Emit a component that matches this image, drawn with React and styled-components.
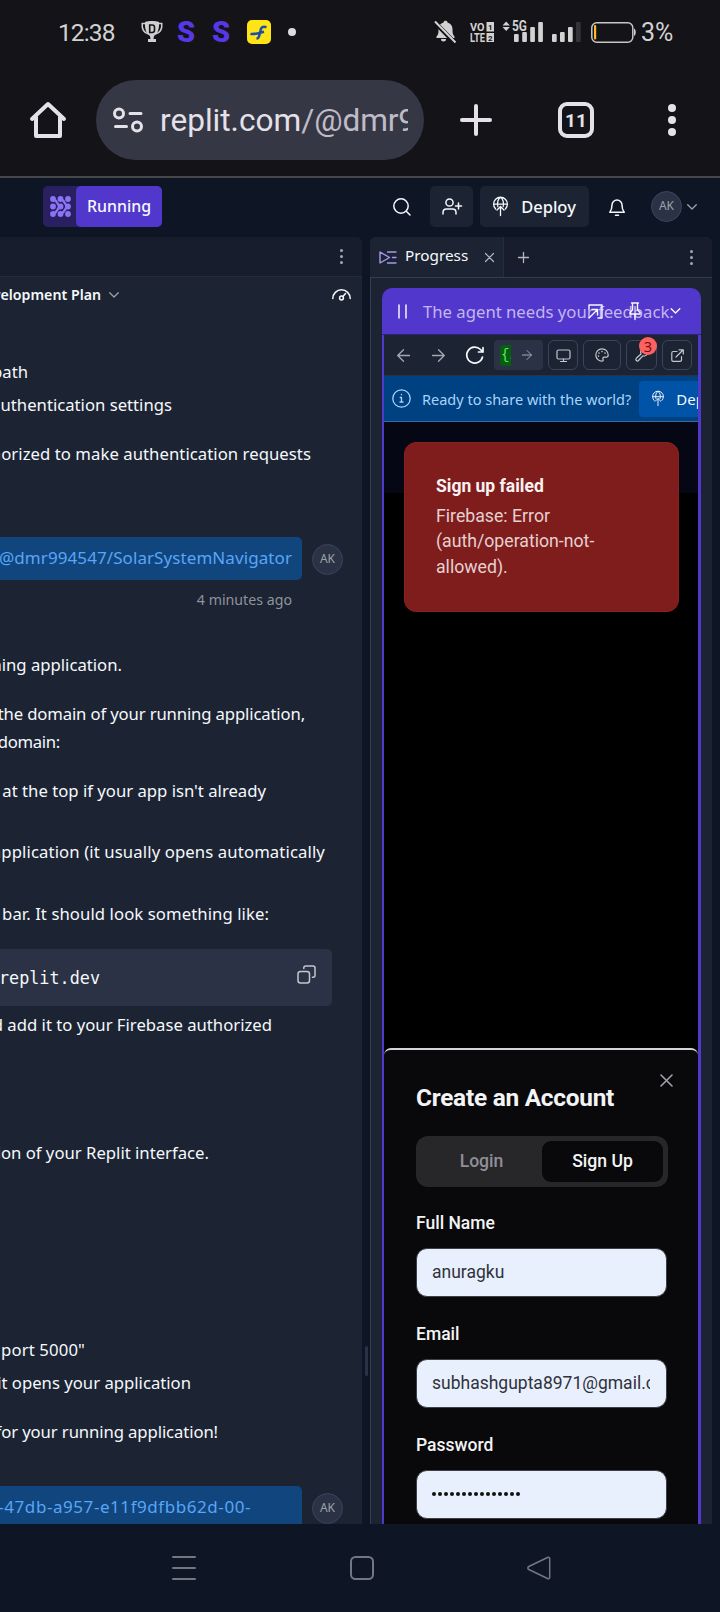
import React from 'react';
import styled, { createGlobalStyle } from 'styled-components';

const plex = '"Noto Sans", "Open Sans", sans-serif';
const roboto = 'Roboto, "Liberation Sans", sans-serif';

const GlobalStyle = createGlobalStyle`
  *, *::before, *::after { box-sizing: border-box; }
  body { margin: 0; background: #0e1525; overflow: hidden; }
  svg { display: block; flex: none; overflow: visible; }
`;

const Screen = styled.div`
  width: 720px;
  height: 1612px;
  display: flex;
  flex-direction: column;
  overflow: hidden;
  background: #0e1525;
  color: #f5f9fc;
  font-family: ${plex};
  white-space: nowrap;
`;

/* ---- Phone status bar ---- */
const StatusBar = styled.header`
  height: 64px;
  flex: none;
  display: flex;
  align-items: center;
  justify-content: space-between;
  padding: 0 46px 0 58px;
  background: #141317;
  color: #d2d2d2;
  font-family: ${roboto};
`;
const StatusGroup = styled.div`
  display: flex;
  align-items: center;
`;
const Clock = styled.span`
  width: 83px;
  font-size: 24.5px;
  letter-spacing: -0.9px;
  line-height: 30px;
  padding-top: 1px;
`;
const AppLetter = styled.span`
  width: 35px;
  font: 900 29px/32px ${roboto};
  color: #5638e6;
`;
const StatusDot = styled.i`
  width: 8px;
  height: 8px;
  border-radius: 50%;
  background: #dcdcdc;
  margin-left: 17px;
`;
const Percent = styled.span`
  font-size: 25px;
  line-height: 30px;
  margin-left: 6px;
  padding-top: 1px;
  width: 33px;
`;

/* ---- Browser bar ---- */
const BrowserBar = styled.nav`
  height: 114px;
  flex: none;
  display: flex;
  align-items: center;
  padding: 0 44px 0 28px;
  background: #141317;
  border-bottom: 2px solid #47464a;
`;
const AddressPill = styled.div`
  width: 328px;
  height: 80px;
  margin: 0 36px 0 28px;
  padding: 0 16px 0 17px;
  border-radius: 40px;
  background: #363745;
  display: flex;
  align-items: center;
  font-family: ${roboto};
  font-size: 31.6px;
  color: #e5e1e9;
`;
const Address = styled.span`
  margin-left: 17px;
  flex: 1;
  overflow: hidden;
  line-height: 44px;
  padding-top: 1px;
`;
const Path = styled.span`
  color: #bfbcc7;
  letter-spacing: -0.1px;
`;
const TabCount = styled.div`
  width: 36px;
  height: 36px;
  margin: 0 66px;
  border: 4px solid #e5e1e9;
  border-radius: 9px;
  color: #e5e1e9;
  text-align: center;
  font: 700 19px/29px ${roboto};
`;
const Dots = styled.div`
  display: flex;
  flex-direction: column;
  gap: ${p => p.$gap}px;
  margin-left: ${p => (p.$push ? 'auto' : 0)};
  i { width: ${p => p.$size}px; height: ${p => p.$size}px; border-radius: 50%; background: ${p => p.$color}; }
`;

/* ---- Workspace toolbar ---- */
const WorkspaceBar = styled.div`
  height: 59px;
  flex: none;
  display: flex;
  align-items: center;
  padding: 0 23px 2px 43px;
`;
const RunControl = styled.div`
  display: flex;
  height: 41px;
  border-radius: 5px;
  background: #292061;
  align-items: center;
  padding-left: 7px;
  gap: 5px;
`;
const RunLabel = styled.span`
  width: 86px;
  height: 41px;
  border-radius: 5px;
  background: #5237cc;
  text-align: center;
  font-size: 15.9px;
  font-weight: 500;
  line-height: 40px;
`;
const BarActions = styled.div`
  margin-left: auto;
  display: flex;
  align-items: center;
`;
const ToolButton = styled.button`
  height: 41px;
  width: ${p => p.$w}px;
  margin-left: ${p => p.$ml}px;
  padding: 0;
  border: 0;
  border-radius: 5px;
  background: #1c2333;
  color: #f5f9fc;
  display: flex;
  align-items: center;
  justify-content: center;
  gap: 13px;
  font: 500 16.5px/38px ${plex};
`;
const Avatar = styled.span`
  width: 31px;
  height: 31px;
  flex: none;
  margin-top: ${p => p.$mt || 0}px;
  border-radius: 50%;
  border: 1px solid #3c445c;
  background: #2b3245;
  color: #9da2a6;
  text-align: center;
  font-size: 12px;
  line-height: 28px;
`;

/* ---- Panels ---- */
const Workspace = styled.main`
  height: 1287px;
  flex: none;
  display: flex;
`;
const ChatPanel = styled.section`
  width: 362px;
  height: 100%;
  background: #1c2333;
  border-top-right-radius: 6px;
  overflow: hidden;
`;
const PanelHeader = styled.div`
  height: 40px;
  background: #171d2d;
  border-bottom: 1px solid #242b3c;
  display: flex;
  align-items: center;
  padding-right: 19px;
`;
const Splitter = styled.div`
  width: 8px;
  display: flex;
  justify-content: center;
  padding-top: 1109px;
  i { width: 3px; height: 30px; border-radius: 2px; background: #2b3245; }
`;
const PlanRow = styled.div`
  height: 36px;
  display: flex;
  align-items: center;
  padding: 0 11px 1px 0;
`;
const PlanTitle = styled.span`
  width: 101px;
  display: flex;
  justify-content: flex-end;
  font-size: 14.2px;
  font-weight: 600;
  margin-right: 8px;
`;
/* Lines run off the left edge of the viewport, so each is anchored by its right end. */
const Line = styled.p`
  margin: ${p => p.$mt}px 0 0;
  width: ${p => p.$w}px;
  display: flex;
  justify-content: flex-end;
  white-space: pre;
  font-size: 16.7px;
  line-height: 28px;
  letter-spacing: ${p => p.$ls || 0}px;
`;
const UserMessage = styled.div`
  display: flex;
  align-items: center;
  gap: 10px;
  margin-top: ${p => p.$mt}px;
`;
const Bubble = styled.div`
  width: 302px;
  height: 43px;
  display: flex;
  justify-content: flex-end;
  padding-right: ${p => p.$pr}px;
  border-radius: 0 5px 5px 0;
  background: #11457e;
  color: #58a6f6;
  font-size: 17px;
  letter-spacing: ${p => p.$ls}px;
  line-height: 42px;
`;
const Timestamp = styled.div`
  width: 292px;
  margin-top: 8px;
  text-align: right;
  font-size: 14.2px;
  line-height: 24px;
  color: #8f949c;
`;
const CodeBlock = styled.div`
  margin-top: 21px;
  width: 332px;
  height: 57px;
  border-radius: 0 5px 5px 0;
  background: #2b3245;
  display: flex;
  align-items: center;
  justify-content: space-between;
  padding: 0 16px 0 0;
`;
const CodeText = styled.code`
  width: 100px;
  display: flex;
  justify-content: flex-end;
  font: 16.8px/30px "DejaVu Sans Mono", monospace;
`;
const CopySlot = styled.span`
  padding-bottom: 7px;
`;

/* ---- Preview panel ---- */
const PreviewPanel = styled.section`
  width: 342px;
  height: 100%;
  display: flex;
  flex-direction: column;
  background: #1c2333;
  border-radius: 6px 6px 0 0;
`;
const TabStrip = styled.div`
  height: 41px;
  flex: none;
  display: flex;
  align-items: center;
  background: #171d2d;
  border-bottom: 1px solid #353c4e;
  border-radius: 6px 6px 0 0;
  padding-right: 19px;
`;
const Tab = styled.div`
  width: 134px;
  height: 40px;
  padding: 0 9px;
  margin-right: 14px;
  display: flex;
  align-items: center;
  background: #1c2333;
  border-right: 1px solid #262d3e;
  border-top-left-radius: 6px;
  font-size: 15.3px;
  line-height: 34px;
  span { margin: 0 auto 0 8px; padding-bottom: 4px; }
`;
const PreviewBody = styled.div`
  flex: 1;
  min-height: 0;
  padding: 10px 11px 0;
  border-left: 1px solid #353c4e;
`;
const AgentFrame = styled.div`
  height: 100%;
  width: 319px;
  display: flex;
  flex-direction: column;
  background: #5237cc;
  border-radius: 10px 10px 0 0;
  overflow: hidden;
`;
const AgentHeader = styled.div`
  position: relative;
  height: 47px;
  flex: none;
  display: flex;
  align-items: center;
  padding: 0 0 0 16px;
  gap: 16px;
  color: #c3b6f0;
  font-size: 16.7px;
  border-bottom: 1px solid #2e2670;
`;
const AgentControls = styled.div`
  position: absolute;
  right: 20px;
  top: 14px;
  display: flex;
  align-items: center;
  color: #f5f9fc;
`;
const Gap = styled.span`
  width: ${p => p.$w}px;
  flex: none;
`;
const Viewport = styled.div`
  flex: 1;
  min-height: 0;
  margin: 0 3px 0 2px;
  display: flex;
  flex-direction: column;
  overflow: hidden;
  background: #000;
`;
const NavBar = styled.div`
  height: 41px;
  flex: none;
  display: flex;
  align-items: center;
  padding: 0 5px 0 13px;
  background: #1c2333;
  border-bottom: 1px solid #2b3245;
`;
const UrlBox = styled.div`
  width: 49px;
  height: 30px;
  margin: 0 5px 0 10px;
  padding: 0 11px 0 6px;
  display: flex;
  align-items: center;
  justify-content: space-between;
  border-radius: 4px;
  background: #2b3245;
`;
const DevBadge = styled.span`
  width: 11px;
  height: 21px;
  overflow: hidden;
  padding-left: 1px;
  border-radius: 4px 0 0 4px;
  background: #04600f;
  color: #6ce070;
  letter-spacing: -2px;
  font: 14px/20px "Liberation Mono", monospace;
`;
const IconBox = styled.div`
  position: relative;
  width: ${p => p.$w}px;
  height: 30px;
  margin-right: 5px;
  flex: none;
  display: flex;
  align-items: center;
  justify-content: center;
  border: 1px solid #3c445c;
  border-radius: 6px;
  &:last-child { margin-right: 0; }
`;
const CountBadge = styled.b`
  position: absolute;
  top: -4px;
  right: -1px;
  width: 18px;
  height: 18px;
  border-radius: 50%;
  background: #ff6161;
  color: #6b1116;
  text-align: center;
  font: 400 14.5px/18px ${plex};
`;
const ShareBanner = styled.div`
  height: 46px;
  flex: none;
  display: flex;
  align-items: center;
  padding-left: 8px;
  background: #004182;
  border-bottom: 1px solid #3a6ba0;
  color: #a8d4fa;
  font-size: 14.5px;
  span { margin: 0 8px 0 11px; }
`;
const BannerButton = styled.div`
  width: 90px;
  height: 36px;
  flex: none;
  display: flex;
  align-items: center;
  padding-left: 13px;
  gap: 12px;
  border-radius: 4px;
  background: #0053a6;
  color: #f5f9fc;
  font-size: 15px;
`;
const AppPage = styled.div`
  flex: 1;
  min-height: 0;
  display: flex;
  flex-direction: column;
  background: linear-gradient(#050814 0 71px, #000 71px);
  font-family: ${roboto};
`;
const Toast = styled.div`
  width: 275px;
  height: 170px;
  margin: 20px 0 436px 20px;
  flex: none;
  padding: 31px 31px 0;
  border: 1px solid #8b2020;
  border-radius: 12px;
  background: #7f1d1d;
  color: #e5d0d0;
  font-size: 17.7px;
  line-height: 25.5px;
`;
const ToastTitle = styled.div`
  margin-bottom: 4px;
  color: #f8f2f2;
  font-size: 17.5px;
  font-weight: 700;
`;
const Dialog = styled.div`
  flex: 1;
  min-height: 0;
  padding: 24px 31px 0 32px;
  border-top: 2px solid #d4d4d8;
  border-radius: 7px 7px 0 0;
  background: #09090b;
  color: #f4f4f5;
  overflow: hidden;
`;
const DialogHeading = styled.div`
  display: flex;
  align-items: flex-start;
  justify-content: space-between;
  margin-right: -6px;
`;
const DialogTitle = styled.h2`
  margin: 9px 0 23px;
  font-size: 24.4px;
  font-weight: 700;
  line-height: 30px;
  letter-spacing: -0.25px;
`;
const TabSwitch = styled.div`
  width: 252px;
  height: 51px;
  padding: 5px;
  display: flex;
  border-radius: 12px;
  background: #27272a;
`;
const SwitchItem = styled.div`
  flex: 1;
  border-radius: 9px;
  background: ${p => (p.$active ? '#09090b' : 'transparent')};
  color: ${p => (p.$active ? '#f4f4f5' : '#8f8f98')};
  text-align: center;
  font-size: 17.6px;
  font-weight: 500;
  line-height: 40px;
`;
const FieldLabel = styled.label`
  display: block;
  margin-top: ${p => p.$mt}px;
  font-size: 17.5px;
  font-weight: 500;
  line-height: 26px;
`;
const Field = styled.div`
  width: 251px;
  height: 49px;
  margin-top: 12px;
  padding: 0 16px 0 15px;
  border: 1px solid #3f3f46;
  border-radius: 11px;
  background: #e8f0fe;
  color: #30323a;
  font-size: 17.5px;
  line-height: 47px;
  div { overflow: hidden; }
`;
const PasswordDots = styled.div`
  height: 46px;
  display: flex;
  align-items: center;
  gap: 2px;
  i { width: 4px; height: 4px; border-radius: 50%; background: #111; }
`;

/* ---- Android navigation ---- */
const SystemNav = styled.footer`
  flex: 1;
  display: flex;
  align-items: center;
  padding-left: 172px;
  gap: 153.5px;
`;

const Stroke = ({ w, h, vb, sw = 1.5, color = 'currentColor', children }) => (
  <svg width={w} height={h} viewBox={vb || `0 0 ${w} ${h}`} fill="none" stroke={color}
    strokeWidth={sw} strokeLinecap="round" strokeLinejoin="round">{children}</svg>
);
const Chevron = ({ w = 10, color = '#9da2a6', sw = 1.3 }) => (
  <Stroke w={w} h={6} vb="0 0 10 6" color={color} sw={sw}><path d="M.7.7 5 5 9.3.7" /></Stroke>
);
const DeployIcon = ({ w, h, sw }) => (
  <Stroke w={w} h={h} vb="0 0 15 19" sw={sw}>
    <path d="M2.600 12A6.900 6.900 0 1 1 12.400 12M.8 7.200h13.400M4.800 9.500C3.700 5 5.500 1.500 7.500.5c2 1 3.800 4.500 2.700 9M7.500 18.500V9.500M4 13l3.500-3.500L11 13" />
  </Stroke>
);
const Arrow = ({ w = 13, flip, color = '#a3a8b0' }) => (
  <Stroke w={w} h={w} vb="0 0 13 13" color={color} sw={1.3}>
    <path d={flip ? 'M12.5 6.5H.7M6.5.7.7 6.5l5.8 5.8' : 'M.5 6.5h11.8M6.5.7l5.8 5.8-5.8 5.8'} />
  </Stroke>
);
const PanelDots = () => (
  <Dots $gap={3} $size={3} $color="#a3a8b0" $push><i /><i /><i /></Dots>
);

const StatusIcons = () => (
  <svg width="201" height="24" viewBox="434 20 201 24" fill="#d2d2d2">
    <path d="M439 37c2-2 2-4 2-7 0-4 2-6 5-7 0-2.500 4-2.500 4 0 3 1 5 3 5 7 0 3 0 5 2 7v1.500h-18zM443.500 39.500h5a2.500 2.500 0 0 1-5 0z" transform="translate(-2.500 -.5)" />
    <path d="M434.500 22 455 43" stroke="#141317" strokeWidth="4.500" />
    <path d="M435 21.500 455.500 42.500" stroke="#d2d2d2" strokeWidth="2" />
    <g fontFamily="Roboto, sans-serif" fontWeight="700" fontSize="12">
      <text x="470" y="31" fontSize="11.500" textLength="14.500" lengthAdjust="spacingAndGlyphs">VO</text>
      <text x="470" y="42" textLength="15" lengthAdjust="spacingAndGlyphs">LTE</text>
    </g>
    <path d="M486.500 22h7.500v9.500h-7.500zM486.500 33h7.500v9h-7.500z" />
    <g fill="#141317" fontFamily="Roboto, sans-serif" fontWeight="700" fontSize="8">
      <text x="488" y="29.800">1</text><text x="488" y="40.500">2</text>
    </g>
    <path d="M502.500 25.500l3.700-4 3.700 4zM502.500 27l3.700 4 3.700-4z" />
    <text x="512" y="31.300" fontFamily="Roboto, sans-serif" fontWeight="700" fontSize="14" textLength="15" lengthAdjust="spacingAndGlyphs">5G</text>
    <g>
      <rect x="514" y="34" width="4.700" height="8" rx="1" /><rect x="522.200" y="32" width="4.700" height="10" rx="1" />
      <rect x="530.200" y="27" width="4.700" height="15" rx="1" /><rect x="538.200" y="22" width="4.700" height="20" rx="1" />
      <rect x="552" y="34" width="4.700" height="8" rx="1" /><rect x="560" y="32" width="4.700" height="10" rx="1" />
      <rect x="568" y="27" width="4.700" height="15" rx="1" /><rect x="576" y="22" width="4.700" height="20" rx="1" fill="#343338" />
    </g>
    <rect x="591.800" y="22.800" width="41" height="19.500" rx="5" fill="none" stroke="#c5c8c5" strokeWidth="1.500" />
    <rect x="594" y="25" width="2.200" height="14.500" rx="1" fill="#fdb927" />
    <path d="M634 28.500c2.300 1 2.300 6.500 0 7.500z" />
  </svg>
);

const Trophy = () => (
  <svg width="22" height="22" viewBox="0 0 22 22">
    <g fill="none" stroke="#cfcfcf" strokeWidth="1.500">
      <path d="M4.500 2.500H1.200C.7 9 3.500 12 7.500 13M17.500 2.500h3.300C21.300 9 18.500 12 14.500 13" />
    </g>
    <path fill="#cfcfcf" d="M4 1c4-1.300 10-1.300 14 0 .5 7-1.500 12-5 14l-.5 3h2.500v3H7v-3h2.500L9 15C5.500 13 3.500 8 4 1z" />
    <path fill="none" stroke="#141317" strokeWidth="1.600" d="M8.700 4v7.500h2.500c1.800 0 2.300-1 2.300-2.200V6.200C13.500 5 13 4 11.200 4z" />
  </svg>
);

const RunLogo = () => (
  <svg width="21" height="21" viewBox="0 0 21 21" fill="#8b73f6">
    {[3, 10.5, 18].map(x => [3, 10.5, 18].map(y => <circle key={`${x}-${y}`} cx={x} cy={y} r="2.900" />))}
    <g fill="none" stroke="#8b73f6" strokeWidth="2.400">
      <path d="M3 3.500c4.500 0 3 4.500 7.500 7-4.500 2.500-3 7-7.500 7" />
      <path d="M10.500 3.500c4.500 0 3 4.500 7.500 7-4.500 2.500-3 7-7.500 7" />
    </g>
  </svg>
);

function ChatColumn() {
  return (
    <ChatPanel>
      <PanelHeader><PanelDots /></PanelHeader>
      <PlanRow>
        <PlanTitle>Development Plan</PlanTitle>
        <Chevron />
        <Gap $w={213} />
        <Stroke w={19} h={13} sw={1.5}>
          <path d="M.8 10.500a8.700 8.700 0 0 1 17.400 0M13.500 5.500l-2.600 3" />
          <circle cx="9.500" cy="10" r="1.900" />
        </Stroke>
      </PlanRow>
      <Line $mt={45} $w={28}>path</Line>
      <Line $mt={5} $w={172}>authentication settings</Line>
      <Line $mt={21} $w={311} $ls={0.055}>authorized to make authentication requests</Line>
      <UserMessage $mt={69}>
        <Bubble $pr={10} $ls={0.08}>@dmr994547/SolarSystemNavigator</Bubble>
        <Avatar $mt={1}>AK</Avatar>
      </UserMessage>
      <Timestamp>4 minutes ago</Timestamp>
      <Line $mt={39} $w={122}>running application.</Line>
      <Line $mt={21} $w={305} $ls={-0.14}>the domain of your running application,</Line>
      <Line $mt={0} $w={60} $ls={-0.3}>domain:</Line>
      <Line $mt={21} $w={266}>at the top if your app isn't already</Line>
      <Line $mt={33} $w={325} $ls={0.12}>application (it usually opens automatically</Line>
      <Line $mt={34} $w={269} $ls={0.08}>bar. It should look something like:</Line>
      <CodeBlock>
        <CodeText>replit.dev</CodeText>
        <CopySlot>
          <Stroke w={19} h={19} color="#c2c8cc" sw={1.500}>
            <rect x="1" y="6.500" width="11.500" height="11.500" rx="2.500" />
            <path d="M6.800 3.500V3c0-1.200.8-2 2-2h7.200c1.200 0 2 .8 2 2v7.200c0 1.200-.8 2-2 2h-.5" />
          </Stroke>
        </CopySlot>
      </CodeBlock>
      <Line $mt={5} $w={272}>and add it to your Firebase authorized</Line>
      <Line $mt={100} $w={209}>section of your Replit interface.</Line>
      <Line $mt={169} $w={85} $ls={0.13}>port 5000"</Line>
      <Line $mt={5} $w={191}>it opens your application</Line>
      <Line $mt={21} $w={218} $ls={-0.1}>for your running application!</Line>
      <UserMessage $mt={40}>
        <Bubble $pr={51} $ls={0.56}>-47db-a957-e11f9dfbb62d-00-</Bubble>
        <Avatar $mt={2}>AK</Avatar>
      </UserMessage>
    </ChatPanel>
  );
}

function SignUpDialog() {
  return (
    <Dialog>
      <DialogHeading>
        <DialogTitle>Create an Account</DialogTitle>
        <Stroke w={13} h={13} color="#a1a1aa" sw={1.600}><path d="M1 1l11 11M12 1 1 12" /></Stroke>
      </DialogHeading>
      <TabSwitch>
        <SwitchItem>Login</SwitchItem>
        <SwitchItem $active>Sign Up</SwitchItem>
      </TabSwitch>
      <FieldLabel $mt={23}>Full Name</FieldLabel>
      <Field><div>anuragku</div></Field>
      <FieldLabel $mt={24}>Email</FieldLabel>
      <Field><div>subhashgupta8971@gmail.com</div></Field>
      <FieldLabel $mt={24}>Password</FieldLabel>
      <Field><PasswordDots>{Array.from({ length: 15 }, (_, i) => <i key={i} />)}</PasswordDots></Field>
    </Dialog>
  );
}

function Preview() {
  return (
    <PreviewPanel>
      <TabStrip>
        <Tab>
          <Stroke w={18} h={13} color="#a997ec" sw={1.400}>
            <path d="M1 1v11l9.500-5.500zM8.500 1H17M13.500 6.500H17M8.500 12H17" />
          </Stroke>
          <span>Progress</span>
          <Stroke w={9} h={9} color="#b3b8bf" sw={1.200}><path d="M.5.5l8 8M8.500.5l-8 8" /></Stroke>
        </Tab>
        <Stroke w={11} h={11} color="#b3b8bf" sw={1.300}><path d="M5.500.5v10M.5 5.500h10" /></Stroke>
        <PanelDots />
      </TabStrip>
      <PreviewBody>
        <AgentFrame>
          <AgentHeader>
            <Stroke w={9} h={15} color="#f5f9fc" sw={1.500}><path d="M1 1v13M8 1v13" /></Stroke>
            <span>The agent needs your feedback.</span>
            <AgentControls>
              <Stroke w={15} h={15} sw={1.400}>
                <path d="M1 5V1h13v13h-4M1 14l8.500-8.500M4 5.500h5.500V11" />
              </Stroke>
              <Gap $w={26} />
              <Stroke w={12} h={18} sw={1.400}>
                <path d="M2.500 1h7M3.500 1v7L1 10.500V12h10v-1.500L8.500 8V1M6 12v5.500" />
              </Stroke>
              <Gap $w={29} />
              <Chevron w={11} color="#f5f9fc" sw={1.400} />
            </AgentControls>
          </AgentHeader>
          <Viewport>
            <NavBar>
              <Arrow flip /><Gap $w={22} /><Arrow /><Gap $w={20} />
              <Stroke w={19} h={18} color="#f5f9fc" sw={1.700}>
                <path d="M17.500 11A8 8 0 1 1 15.500 3.500L17.800 6M18 1.500V6h-4.500" />
              </Stroke>
              <UrlBox><DevBadge>{'{.'}</DevBadge><Arrow w={10} /></UrlBox>
              <IconBox $w={30}>
                <Stroke w={15} h={13} color="#c2c8cc" sw={1.200}><rect x="1" y="1" width="13" height="9" rx="1.500" /><path d="M7.500 10v2.500M4.500 12.500h6" /></Stroke>
              </IconBox>
              <IconBox $w={38}>
                <Stroke w={14} h={14} color="#c2c8cc" sw={1.200}>
                  <path d="M7 .8C3.500.8.8 3.600.8 7s2.800 6.200 6.200 6.200c1.200 0 1.500-1 1-1.800-.6-1 .1-2.200 1.300-2.200h2c1.200 0 1.900-1 1.900-2.200C13.200 3.500 10.500.8 7 .8z" />
                  <path d="M4 5v.1M7 3.500v.1M10 5v.1M3.500 8v.1" strokeWidth="1.600" />
                </Stroke>
              </IconBox>
              <IconBox $w={31}>
                <Stroke w={14} h={14} color="#c2c8cc" sw={1.200}>
                  <path d="M12.500 4.500a3.500 3.500 0 0 1-4.700 3.300L3.500 12.500a1.500 1.500 0 0 1-2.200-2.200L6 6a3.500 3.500 0 0 1 4-5L8.500 3l2 2z" />
                </Stroke>
                <CountBadge>3</CountBadge>
              </IconBox>
              <IconBox $w={30}>
                <Stroke w={13} h={13} color="#c2c8cc" sw={1.200}>
                  <path d="M6 2.500H2.300C1.500 2.500.8 3 .8 4v7c0 .8.600 1.400 1.400 1.400H9c1 0 1.500-.6 1.500-1.400V7.500M8 .8h4.300V5M12 1 5 8" />
                </Stroke>
              </IconBox>
            </NavBar>
            <ShareBanner>
              <Stroke w={19} h={19} sw={1.300}>
                <circle cx="9.500" cy="9.500" r="8.700" /><path d="M9.500 5.500v.2M8.200 8.500h1.300V13M8 13h3" />
              </Stroke>
              <span>Ready to share with the world?</span>
              <BannerButton><DeployIcon w={12} h={15} sw={1.200} />Deploy</BannerButton>
            </ShareBanner>
            <AppPage>
              <Toast>
                <ToastTitle>Sign up failed</ToastTitle>
                Firebase: Error<br />(auth/operation-not-<br />allowed).
              </Toast>
              <SignUpDialog />
            </AppPage>
          </Viewport>
        </AgentFrame>
      </PreviewBody>
    </PreviewPanel>
  );
}

export default function App() {
  return (
    <Screen>
      <GlobalStyle />
      <StatusBar>
        <StatusGroup>
          <Clock>12:38</Clock>
          <Trophy />
          <Gap $w={14} />
          <AppLetter>S</AppLetter>
          <AppLetter>S</AppLetter>
          <svg width="24" height="24" viewBox="0 0 24 24">
            <rect width="24" height="24" rx="5" fill="#ffe516" />
            <path d="M19.500 7.200c-4-1.500-5.500.5-6 3.300L12 16.500c-.4 1.500-1 2-2.500 2.300M3.500 13.800c3 1 7.500-.5 13.500-2" fill="none" stroke="#1c4fa8" strokeWidth="2.600" />
          </svg>
          <StatusDot />
        </StatusGroup>
        <StatusGroup><StatusIcons /><Percent>3%</Percent></StatusGroup>
      </StatusBar>
      <BrowserBar>
        <Stroke w={40} h={40} color="#e5e1e9" sw={4}>
          <path d="M4 19 20 4l16 15M8 17v19h24V17" />
        </Stroke>
        <AddressPill>
          <Stroke w={30} h={26} color="#e5e1e9" sw={3}>
            <circle cx="6" cy="6.500" r="4.500" /><path d="M17 6.500h11M2.500 19.500h11" /><circle cx="24" cy="19.500" r="4.500" />
          </Stroke>
          <Address>replit.com<Path>/@dmr994547</Path></Address>
        </AddressPill>
        <Stroke w={32} h={32} color="#e5e1e9" sw={4}><path d="M16 2v28M2 16h28" /></Stroke>
        <TabCount>11</TabCount>
        <Dots $gap={4} $size={8} $color="#e5e1e9" $push><i /><i /><i /></Dots>
      </BrowserBar>
      <WorkspaceBar>
        <RunControl><RunLogo /><RunLabel>Running</RunLabel></RunControl>
        <BarActions>
          <Stroke w={18} h={18} sw={1.500}><circle cx="8" cy="8" r="7.200" /><path d="M13.300 13.300l3.700 3.700" /></Stroke>
          <ToolButton $w={43} $ml={19}>
            <Stroke w={20} h={17} sw={1.500}>
              <circle cx="7.500" cy="4.500" r="3.600" /><path d="M1 16v-1.500c0-2 1.500-3.500 3.500-3.500h6c2 0 3.500 1.500 3.500 3.500V16M16.500 5v6M13.500 8h6" />
            </Stroke>
          </ToolButton>
          <ToolButton $w={109} $ml={7}><DeployIcon w={15} h={19} sw={1.300} />Deploy</ToolButton>
          <Gap $w={20} />
          <Stroke w={16} h={18} sw={1.500}>
            <path d="M3 7a5 5 0 0 1 10 0c0 4 .8 5.500 2.200 7.300H.8C2.200 12.500 3 11 3 7zM6.500 17.300h3" />
          </Stroke>
          <Gap $w={26} />
          <Avatar>AK</Avatar>
          <Gap $w={5} />
          <Chevron />
        </BarActions>
      </WorkspaceBar>
      <Workspace>
        <ChatColumn />
        <Splitter><i /></Splitter>
        <Preview />
      </Workspace>
      <SystemNav>
        <Stroke w={24} h={24} color="#737780" sw={2}><path d="M1 1h22M1 12h22M1 23h22" /></Stroke>
        <Stroke w={24} h={24} color="#737780" sw={2}><rect x="1" y="1" width="22" height="22" rx="4.500" /></Stroke>
        <Stroke w={24} h={24} color="#737780" sw={1.500}><path d="M20.500 1.500 1.800 10.500c-1.300.8-1.300 2.200 0 3L20.500 22.500c1.200.5 2.200 0 2.200-1.200V2.700c0-1.200-1-1.700-2.200-1.200z" /></Stroke>
      </SystemNav>
    </Screen>
  );
}
